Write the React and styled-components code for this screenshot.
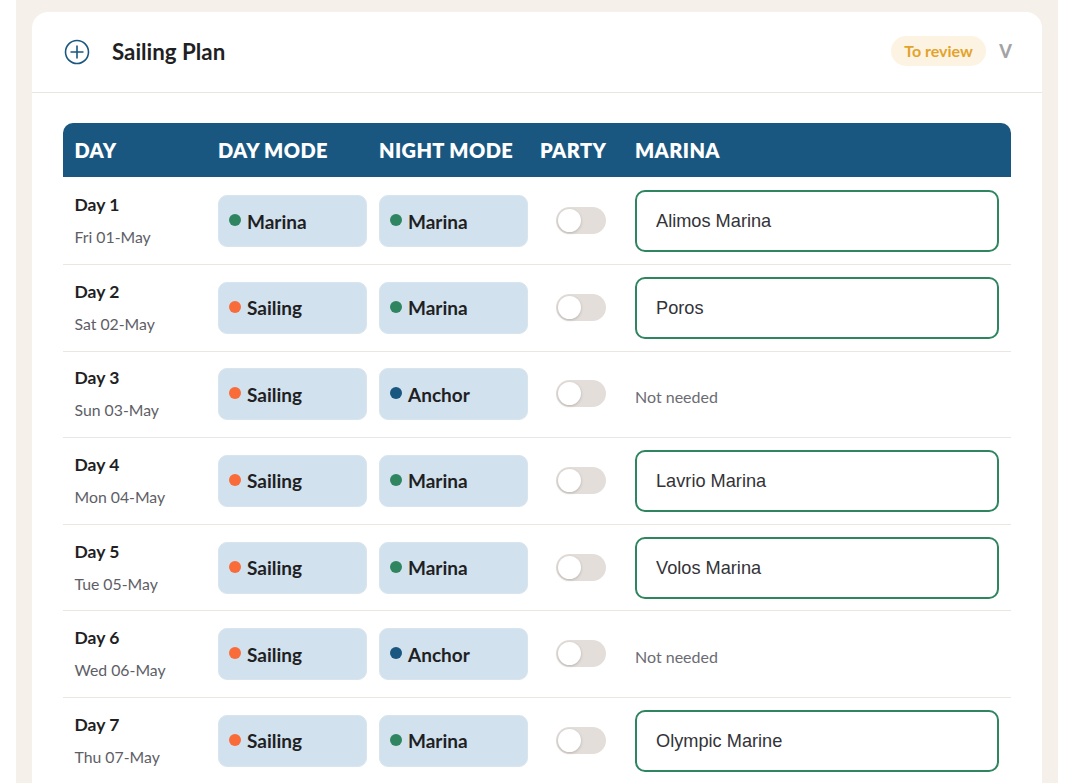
import { createGlobalStyle } from "styled-components"
import styled from "styled-components"

const days = [
    { title: "Day 1", date: "Fri 01-May", day: "Marina", night: "Marina", marina: "Alimos Marina" },
    { title: "Day 2", date: "Sat 02-May", day: "Sailing", night: "Marina", marina: "Poros" },
    { title: "Day 3", date: "Sun 03-May", day: "Sailing", night: "Anchor" },
    { title: "Day 4", date: "Mon 04-May", day: "Sailing", night: "Marina", marina: "Lavrio Marina" },
    { title: "Day 5", date: "Tue 05-May", day: "Sailing", night: "Marina", marina: "Volos Marina" },
    { title: "Day 6", date: "Wed 06-May", day: "Sailing", night: "Anchor" },
    { title: "Day 7", date: "Thu 07-May", day: "Sailing", night: "Marina", marina: "Olympic Marine" },
]

const dotColors = { Marina: "#2e8560", Sailing: "#f96c3a", Anchor: "#195781" }

export default function App() {
    return (
        <>
            <GlobalStyle />
            <Page>
                <Card>
                    <CardHeader>
                        <TitleGroup>
                            <svg width="26" height="26" viewBox="0 0 26 26" fill="none" stroke="#195781" strokeWidth="1.6">
                                <circle cx="13" cy="13" r="11.5" />
                                <path d="M13 6.5v13M6.5 13h13" />
                            </svg>
                            <Title>Sailing Plan</Title>
                        </TitleGroup>
                        <StatusGroup>
                            <StatusBadge>To review</StatusBadge>
                            <Chevron>V</Chevron>
                        </StatusGroup>
                    </CardHeader>
                    <CardBody>
                        <HeadRow>
                            <span>DAY</span>
                            <span>DAY MODE</span>
                            <span>NIGHT MODE</span>
                            <span>PARTY</span>
                            <span>MARINA</span>
                        </HeadRow>
                        {days.map(item => (
                            <Row key={item.title}>
                                <DayCell>
                                    <DayTitle>{item.title}</DayTitle>
                                    <DayDate>{item.date}</DayDate>
                                </DayCell>
                                <ModePill><Dot $color={dotColors[item.day]} />{item.day}</ModePill>
                                <ModePill><Dot $color={dotColors[item.night]} />{item.night}</ModePill>
                                <Toggle><Thumb /></Toggle>
                                {item.marina
                                    ? <MarinaInput defaultValue={item.marina} />
                                    : <NotNeeded>Not needed</NotNeeded>}
                            </Row>
                        ))}
                    </CardBody>
                </Card>
            </Page>
        </>
    )
}

const GlobalStyle = createGlobalStyle`
    html, body {
        margin: 0;
        height: 783px;
        overflow: hidden;
        background: #ffffff;
    }
    * {
        box-sizing: border-box;
    }
`
const Page = styled.div`
    margin: 0 11px 0 16px;
    height: 783px;
    padding: 12px 16px 0;
    background: #f5f0ea;
    font-family: "Lato", sans-serif;
    color: #1f1f24;
`
const Card = styled.div`
    height: 771px;
    background: #ffffff;
    border-radius: 16px 16px 0 0;
    overflow: hidden;
`
const CardHeader = styled.div`
    display: flex;
    align-items: center;
    justify-content: space-between;
    height: 81px;
    padding: 0 30px 0 32px;
    border-bottom: 1px solid #e8e6e3;
`
const TitleGroup = styled.div`
    display: flex;
    align-items: center;
    gap: 22px;
`
const Title = styled.h2`
    margin: -2px 0 0;
    font-size: 22.3px;
    font-weight: 700;
`
const StatusGroup = styled.div`
    display: flex;
    align-items: center;
    gap: 13px;
    margin-top: -3px;
`
const StatusBadge = styled.span`
    display: flex;
    align-items: center;
    height: 30px;
    padding: 0 13.5px;
    border-radius: 15px;
    background: #fdf3e3;
    color: #e3a32b;
    font-size: 16px;
    font-weight: 700;
`
const Chevron = styled.span`
    color: #a3a3a6;
    font-size: 18px;
    font-weight: 900;
`
const CardBody = styled.div`
    padding: 30px 31px 0;
`
const columns = `
    display: grid;
    grid-template-columns: 143.5px 161px 161px 95px 1fr;
    align-items: center;
`
const HeadRow = styled.div`
    ${columns}
    height: 54px;
    margin-bottom: 1.4px;
    padding-left: 11.5px;
    background: #195781;
    border-radius: 10px 10px 0 0;
    color: #ffffff;
    font-size: 20px;
    font-weight: 800;
    letter-spacing: 0.4px;
`
const Row = styled.div`
    ${columns}
    height: 86.6px;
    padding-left: 11.5px;
    border-bottom: 1px solid #e9e6e3;
`
const DayCell = styled.div`
    display: flex;
    flex-direction: column;
    gap: 13px;
    margin-top: -1px;
`
const DayTitle = styled.span`
    font-size: 17.5px;
    line-height: 20px;
    font-weight: 700;
`
const DayDate = styled.span`
    font-size: 15.8px;
    line-height: 18px;
    color: #5e5e66;
`
const ModePill = styled.div`
    display: flex;
    align-items: center;
    gap: 6.5px;
    width: 149px;
    height: 52px;
    padding-left: 9.5px;
    border-radius: 9px;
    background: #d1e1ed;
    border: 1px solid #d9e5ee;
    font-size: 19px;
    font-weight: 700;
`
const Dot = styled.span`
    width: 12px;
    height: 12px;
    border-radius: 50%;
    margin-top: -2px;
    background: ${props => props.$color};
`
const Toggle = styled.div`
    position: relative;
    width: 50px;
    height: 27px;
    margin-left: 16px;
    margin-top: -1px;
    border-radius: 14px;
    background: #e4deda;
`
const Thumb = styled.span`
    position: absolute;
    left: 2px;
    top: 2px;
    width: 23px;
    height: 23px;
    border-radius: 50%;
    background: #ffffff;
    box-shadow: 0 1px 3px rgba(0, 0, 0, 0.2);
`
const MarinaInput = styled.input`
    width: 364px;
    height: 62px;
    padding: 1px 19px 0;
    border: 2px solid #2e8560;
    border-radius: 10px;
    background: #ffffff;
    color: #333338;
    font-family: "Liberation Sans", Arial, sans-serif;
    font-size: 18.2px;
    outline: none;
`
const NotNeeded = styled.span`
    margin-top: 5px;
    font-size: 16px;
    color: #6b6b73;
`
